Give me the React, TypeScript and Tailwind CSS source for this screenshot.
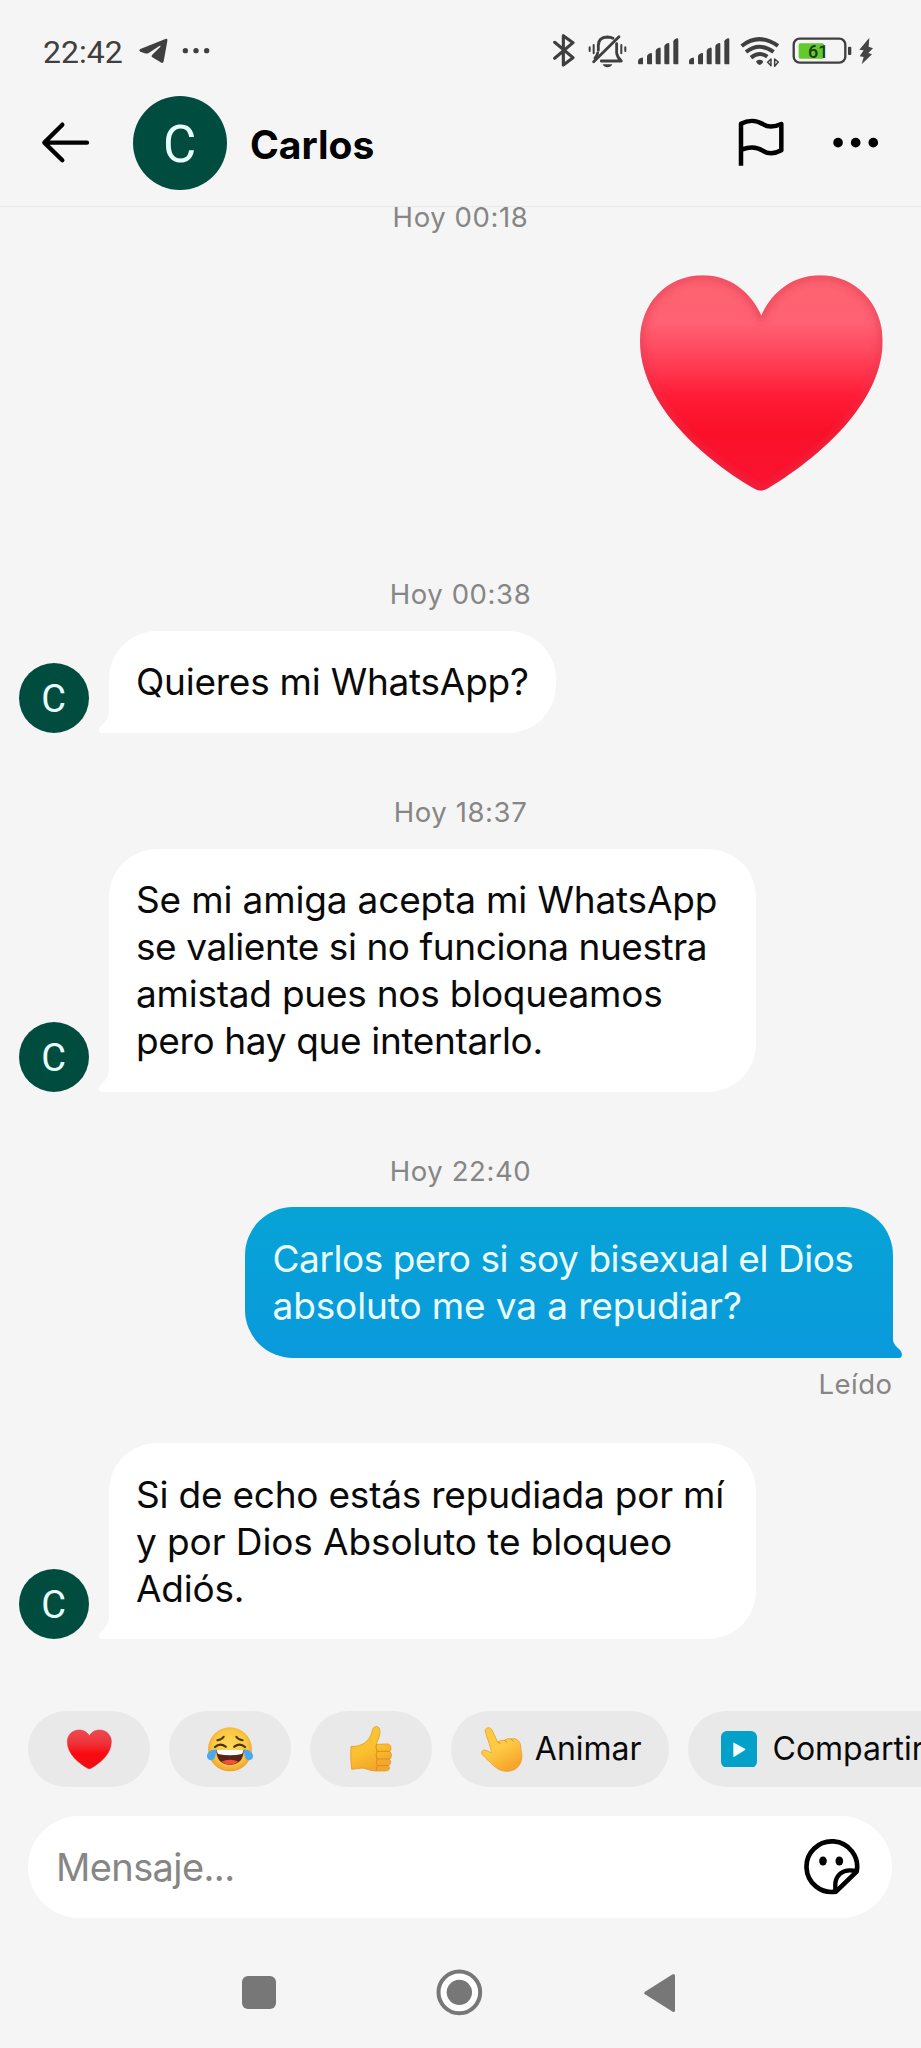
import type { ReactNode } from "react";

type IconProps = {
  box: [number, number, number, number];
  className: string;
  children: ReactNode;
};

function Icon({ box, className, children }: IconProps) {
  return (
    <svg viewBox={box.join(" ")} fill="none" className={`block shrink-0 ${className}`} aria-hidden="true">
      {children}
    </svg>
  );
}

const SIGNAL_BARS = [
  { x: 0, h: 20 },
  { x: 27, h: 34 },
  { x: 53, h: 50 },
  { x: 79, h: 64 },
  { x: 106, h: 78 },
];

function Signal() {
  return (
    <Icon box={[0, 0, 122, 106]} className="h-[35.3px] w-[40.7px]">
      {SIGNAL_BARS.map(({ x, h }) => (
        <path
          key={x}
          d={`M${x} ${94 - h + 9} q1 -5 6 -7 l5 -2 q4 -1 4 4 V94 H${x + 3} q-3 0 -3 -3z`}
          fill="#3f3f3f"
        />
      ))}
    </Icon>
  );
}

function StatusBar() {
  return (
    <div className="flex h-20 items-center pt-[22px] pl-[43px] text-[#3f3f3f]">
      <span className="pt-0.5 font-['Roboto',sans-serif] text-[32px] leading-none">22:42</span>
      <Icon box={[415, 115, 92, 84]} className="ml-[15.500px] h-7 w-[30.7px]">
        <path
          d="M422 151 L497 121 q8 -3 6 6 L492 188 q-2 8 -9 3 L458 176 q-5 -3 -1 -7 L482 144 q2 -4 -3 -2 L447 163 q-6 3 -12 1 L422 159 q-6 -4 0 -8z"
          fill="#3f3f3f"
        />
      </Icon>
      <Icon box={[550, 140, 86, 28]} className="ml-[13.5px] h-[9.3px] w-[28.7px]">
        <circle cx="560" cy="154" r="8" fill="#3f3f3f" />
        <circle cx="592" cy="154" r="8" fill="#3f3f3f" />
        <circle cx="624" cy="154" r="8" fill="#3f3f3f" />
      </Icon>

      <div className="mr-[47.500px] ml-auto flex items-center">
        <Icon box={[100, 100, 68, 106]} className="h-[35.3px] w-[22.7px]">
          <path
            d="M105 128 L160 174 L131 196 V108 L160 129 L105 176"
            stroke="#3f3f3f"
            strokeWidth="9.500"
            strokeLinejoin="round"
            strokeLinecap="round"
          />
        </Icon>
        <Icon box={[203, 100, 118, 106]} className="ml-[11.7px] h-[35.3px] w-[39.3px]">
          <g stroke="#3f3f3f" strokeWidth="8.500" strokeLinecap="round">
            <path d="M220 186 L296 111" />
            <path d="M234 152 V137 q0 -24 27 -25 q10 0 17 4" />
            <path d="M289 132 V160 q1 12 14 24 H243" strokeLinejoin="round" />
            <path d="M232 160 q-2 9 -8 15" />
            <path d="M208 143 V154 M220 136 V161 M303 136 V161 M315 143 V154" strokeWidth="6" />
          </g>
          <path d="M247 194 h29 q-4 9 -14.500 9 t-14.500 -9z" fill="#3f3f3f" />
        </Icon>
        <div className="ml-[11px] flex gap-[10.3px]">
          <Signal />
          <Signal />
        </div>
        <Icon box={[662, 100, 120, 106]} className="ml-[10.700px] h-[35.3px] w-10">
          <g stroke="#3f3f3f" strokeWidth="12">
            <path d="M667 139 Q720 98 776 139" />
            <path d="M680 157 Q720 126 763 157" />
            <path d="M695 174 Q720 154 744 171" />
          </g>
          <path d="M711 184 q10 -8 20 0 q1 8 -10 12 q-11 -4 -10 -12z" fill="#3f3f3f" />
          <path d="M755 178 V198 l-10 -10z M766 200 V178 l11 9z" stroke="#3f3f3f" strokeWidth="4.500" strokeLinejoin="round" />
        </Icon>
        <Icon box={[817, 100, 180, 106]} className="ml-[12px] h-[35.3px] w-[60px]">
          <rect x="822" y="117" width="155" height="72" rx="18" stroke="#3f3f3f" strokeWidth="7" />
          <rect x="837" y="131" width="76" height="46" rx="5" fill="#62c92f" />
          <rect x="985" y="141" width="10" height="25" rx="3" fill="#3f3f3f" />
          <text x="865" y="175" fontSize="54" fontWeight="500" fontFamily="Roboto, sans-serif" fill="#1d3d10">
            61
          </text>
        </Icon>
        <Icon box={[1013, 100, 48, 106]} className="ml-[5.300px] h-[35.3px] w-4">
          <path
            d="M1047 114 L1017 150 L1030 152 L1018 170 L1030 172 L1024 194 L1055 164 L1044 160 L1058 146 L1045 141z"
            fill="#454545"
          />
        </Icon>
      </div>
    </div>
  );
}

function Header() {
  return (
    <header className="h-[207px] shrink-0 border-b border-[#e9e9e9]">
      <StatusBar />
      <div className="flex h-[126px] items-center pl-10">
        <Icon box={[120, 360, 156, 136]} className="h-[45.3px] w-[52px]">
          <path
            d="M261 428 H135 M187 374 L133 428 L187 481"
            stroke="#000"
            strokeWidth="13"
            strokeLinecap="round"
            strokeLinejoin="round"
          />
        </Icon>
        <div className="ml-[41px] flex size-[94px] items-center justify-center rounded-full bg-[#004d40]">
          <span className="pt-0.5 pr-px font-['Roboto',sans-serif] text-[51px] leading-none text-[#e9fffb]">C</span>
        </div>
        <h1 className="ml-[23px] pt-0.5 text-[39px] leading-none font-bold text-black">Carlos</h1>
        <Icon box={[652, 352, 144, 158]} className="ml-auto h-[52.700px] w-12">
          <path
            d="M664 498 V372 C685 361 710 361 729 373 C745 384 765 382 785 373 V452 C765 463 744 463 729 453 C710 440 688 441 666 450"
            stroke="#000"
            strokeWidth="13.500"
            strokeLinecap="butt"
            strokeLinejoin="round"
          />
        </Icon>
        <Icon box={[938, 410, 138, 40]} className="mr-[42.500px] ml-[47.500px] h-[13.3px] w-[46px]">
          <circle cx="953" cy="430" r="14.500" fill="#000" />
          <circle cx="1006" cy="430" r="14.500" fill="#000" />
          <circle cx="1059" cy="430" r="14.500" fill="#000" />
        </Icon>
      </div>
    </header>
  );
}

function Stamp({ className, children }: { className: string; children: ReactNode }) {
  return (
    <p className={`text-center text-[27.500px] leading-10 tracking-[0.6px] text-[#868686] ${className}`}>{children}</p>
  );
}

type Line = { text: string; tracking: string };

function Incoming({ lines, className, bubbleClassName }: { lines: Line[]; className: string; bubbleClassName: string }) {
  return (
    <div className={`flex items-end pl-[18.500px] ${className}`}>
      <div className="flex size-[70px] shrink-0 items-center justify-center rounded-full bg-[#004d40]">
        <span className="pt-0.5 font-['Roboto',sans-serif] text-[38px] leading-none text-[#e9fffb]">C</span>
      </div>
      <div
        className={`relative ml-[20px] rounded-[48px] rounded-bl-none bg-white pl-[27.500px] text-[37px] leading-[47px] text-[#0a0a0a] ${bubbleClassName}`}
      >
        {lines.map((line) => (
          <p key={line.text} className={`whitespace-nowrap ${line.tracking}`}>
            {line.text}
          </p>
        ))}
        <svg viewBox="0 0 14 22" className="absolute bottom-0 -left-[11px] h-[22px] w-[14px]" aria-hidden="true">
          <path d="M11 0 Q11 8 2 16 Q-1 20 3 22 H14 V0z" fill="#fff" />
        </svg>
      </div>
    </div>
  );
}

const HEART =
  "M485 225 C455 155 390 104 310 104 C200 104 121 190 121 300 C121 480 290 640 462 743 Q483 757 505 743 C690 630 849 470 849 300 C849 190 768 104 660 104 C580 104 515 155 485 225z";

function BigHeart() {
  return (
    <Icon box={[118, 100, 734, 655]} className="mt-[37px] mr-[37.500px] ml-auto h-[218.3px] w-[244.700px]">
      <defs>
        <linearGradient id="heartFill" x1="0" y1="0" x2="0" y2="1">
          <stop offset="0" stopColor="#fc6370" />
          <stop offset="0.22" stopColor="#ff6273" />
          <stop offset="0.38" stopColor="#ff435a" />
          <stop offset="0.56" stopColor="#ff1c36" />
          <stop offset="0.72" stopColor="#fb1029" />
          <stop offset="1" stopColor="#fa1331" />
        </linearGradient>
        <clipPath id="heartClip">
          <path d={HEART} />
        </clipPath>
        <filter id="rimBlur" x="-10%" y="-10%" width="120%" height="120%">
          <feGaussianBlur stdDeviation="13" />
        </filter>
      </defs>
      <g clipPath="url(#heartClip)">
        <rect x="118" y="100" width="734" height="655" fill="url(#heartFill)" />
        <path d={HEART} stroke="#e0334c" strokeOpacity="0.7" strokeWidth="18" filter="url(#rimBlur)" />
      </g>
    </Icon>
  );
}

function SmallHeart() {
  return (
    <Icon box={[198, 112, 140, 128]} className="h-[42.700px] w-[46.700px]">
      <defs>
        <linearGradient id="smallHeart" x1="0" y1="0" x2="0" y2="1">
          <stop offset="0" stopColor="#ee4a50" />
          <stop offset="0.35" stopColor="#ee3238" />
          <stop offset="0.6" stopColor="#fb0a10" />
          <stop offset="1" stopColor="#ee0d14" />
        </linearGradient>
      </defs>
      <path
        d="M268 136 C262 124 250 118 237 118 C216 118 202 134 202 153 C202 190 234 216 263 233 Q268 236 273 233 C302 216 334 190 334 153 C334 134 320 118 299 118 C286 118 274 124 268 136z"
        fill="url(#smallHeart)"
        stroke="#d9303a"
        strokeWidth="1.500"
      />
    </Icon>
  );
}

function JoyFace() {
  return (
    <Icon box={[618, 106, 144, 140]} className="h-[46.700px] w-12">
      <defs>
        <radialGradient id="joyFace" cx="0.5" cy="0.45" r="0.55">
          <stop offset="0" stopColor="#fdd95a" />
          <stop offset="0.7" stopColor="#fbc741" />
          <stop offset="1" stopColor="#f0a12f" />
        </radialGradient>
      </defs>
      <circle cx="690" cy="176" r="66" fill="url(#joyFace)" />
      <path d="M652 149 q14 -3 19 -11 M728 149 q-14 -3 -19 -11" stroke="#4c3410" strokeWidth="6" strokeLinecap="round" />
      <path d="M645 169 q15 -14 32 -1 M703 168 q17 -13 32 1" stroke="#4c3410" strokeWidth="7" strokeLinecap="round" />
      <path d="M649 178 H731 C731 207 716 222 690 222 C664 222 649 207 649 178z" fill="#5a2416" />
      <path d="M651 178 H729 q1 8 -3 12 Q690 197 654 190 q-4 -4 -3 -12z" fill="#fff" />
      <path d="M664 213 Q690 201 716 213 Q690 230 664 213z" fill="#f0503c" />
      <path d="M651 177 C636 174 619 184 621 199 C623 211 641 212 645 200 C648 191 646 185 651 177z" fill="#4ba8ee" />
      <path d="M729 177 C744 174 761 184 759 199 C757 211 739 212 735 200 C732 191 734 185 729 177z" fill="#4ba8ee" />
    </Icon>
  );
}

function ThumbUp() {
  return (
    <Icon box={[1046, 106, 132, 142]} className="h-[47.300px] w-11">
      <defs>
        <linearGradient id="thumb" x1="0" y1="0" x2="0.4" y2="1">
          <stop offset="0" stopColor="#fbc736" />
          <stop offset="0.6" stopColor="#fbc02d" />
          <stop offset="1" stopColor="#f3a62b" />
        </linearGradient>
      </defs>
      <path
        d="M1052 170 C1074 172 1098 163 1110 140 C1117 128 1114 114 1125 111 C1137 108 1141 122 1138 135 C1136 147 1130 156 1128 164 L1164 163 Q1174 167 1172 178 Q1171 184 1168 186 Q1175 190 1173 200 Q1172 207 1167 209 Q1173 213 1171 221 Q1169 227 1164 228 Q1170 233 1167 239 Q1164 244 1155 244 H1128 C1105 244 1095 233 1080 236 L1054 239 Q1049 205 1052 170z"
        fill="url(#thumb)"
        stroke="#e59a2a"
        strokeWidth="2.500"
        strokeLinejoin="round"
      />
      <path
        d="M1128 164 q-3 10 2 21 H1168 M1130 185 q-6 11 0 23 H1167 M1130 208 q-5 10 1 20 H1164 M1131 228 q-4 6 -2 14"
        stroke="#dd8d22"
        strokeWidth="3"
        strokeLinecap="round"
      />
    </Icon>
  );
}

function PokingFinger() {
  return (
    <Icon box={[120, 106, 130, 140]} className="h-[46.700px] w-[43.300px]">
      <defs>
        <linearGradient id="finger" x1="0" y1="0" x2="0.5" y2="1">
          <stop offset="0" stopColor="#fdc93a" />
          <stop offset="0.55" stopColor="#fdcb45" />
          <stop offset="1" stopColor="#f7a62c" />
        </linearGradient>
      </defs>
      <path
        d="M136 124 C132 111 150 106 156 118 L173 154 Q182 147 193 149 Q202 141 212 145 Q226 140 235 150 Q243 157 243 178 C252 205 240 240 204 242 C178 243 165 229 150 215 L127 192 Q121 180 133 178 Q140 178 154 187 C154 175 148 160 145 151z"
        fill="url(#finger)"
        stroke="#e8a030"
        strokeWidth="2.500"
        strokeLinejoin="round"
      />
      <path
        d="M173 154 Q176 159 180 158 M193 149 Q199 150 201 155 M212 145 Q218 147 220 152"
        stroke="#dc9226"
        strokeWidth="3"
        strokeLinecap="round"
      />
    </Icon>
  );
}

function Chip({ className, children }: { className: string; children: ReactNode }) {
  return (
    <div className={`flex h-[76px] shrink-0 items-center rounded-full bg-[#e9e9e9] ${className}`}>{children}</div>
  );
}

function QuickReplies() {
  return (
    <div className="flex h-[76px] shrink-0 gap-[19px] overflow-hidden pl-7 text-[32px] leading-10 text-[#0a0a0a]">
      <Chip className="w-[122px] justify-center">
        <SmallHeart />
      </Chip>
      <Chip className="w-[122px] justify-center">
        <JoyFace />
      </Chip>
      <Chip className="w-[122px] justify-center">
        <ThumbUp />
      </Chip>
      <Chip className="w-[218px] pl-[29px]">
        <PokingFinger />
        <span className="ml-[11.500px]">Animar</span>
      </Chip>
      <Chip className="w-[280px] pl-[33px]">
        <Icon box={[0, 0, 108, 110]} className="h-[36.700px] w-9">
          <rect width="108" height="110" rx="18" fill="#03a0c9" />
          <path d="M39 35 L72 53 Q75 55 72 57 L39 78 Q37 79 37 76 V37 Q37 34 39 35z" fill="#f3feff" />
        </Icon>
        <span className="ml-[15.500px] whitespace-nowrap">Compartir</span>
      </Chip>
    </div>
  );
}

function Composer() {
  return (
    <div className="mr-[29px] ml-7 mt-[29px] flex h-[102px] shrink-0 items-center rounded-full bg-white pr-8 pl-[28px]">
      <span className="text-[38px] leading-none tracking-[-0.6px] text-[#868686]">Mensaje...</span>
      <Icon box={[1090, 444, 172, 172]} className="ml-auto h-[57.300px] w-[57.300px]">
        <path d="M1251 545 A76 76 0 1 0 1189 605 Z" stroke="#000" strokeWidth="14" strokeLinejoin="round" />
        <path
          d="M1187 604 V580 C1190 555 1208 540 1232 541 L1251 543"
          stroke="#000"
          strokeWidth="13"
          strokeLinejoin="round"
        />
        <ellipse cx="1150" cy="513" rx="11.500" ry="13.500" fill="#000" />
        <ellipse cx="1199" cy="513" rx="11.500" ry="13.500" fill="#000" />
      </Icon>
    </div>
  );
}

function NavBar() {
  return (
    <nav className="flex h-[130px] shrink-0 items-center pt-[19px] pl-[242px]">
      <div className="size-[33.500px] rounded-[6px] bg-[#777]" />
      <Icon box={[709, 117, 140, 140]} className="ml-[160.500px] size-[46.700px]">
        <circle cx="779" cy="187" r="62.500" fill="#fff" stroke="#777" strokeWidth="12" />
        <circle cx="779" cy="187" r="38" fill="#777" />
      </Icon>
      <Icon box={[1330, 127, 98, 120]} className="ml-[160px] h-10 w-[32.700px]">
        <path d="M1336 183 L1419 131 Q1426 129 1426 135 V239 Q1425 246 1419 243 L1336 191 Q1331 187 1336 183z" fill="#777" />
      </Icon>
    </nav>
  );
}

export default function App() {
  return (
    <div className="flex h-[2048px] w-[921px] flex-col overflow-hidden bg-[#f5f5f5] font-['Inter',sans-serif]">
      <Header />
      <main className="flex h-[1504px] shrink-0 flex-col overflow-hidden">
        <Stamp className="-mt-[10px]">Hoy 00:18</Stamp>
        <BigHeart />
        <Stamp className="mt-[82px]">Hoy 00:38</Stamp>
        <Incoming
          className="mt-[17px]"
          bubbleClassName="w-[447px] pt-[27px] pb-7"
          lines={[{ text: "Quieres mi WhatsApp?", tracking: "tracking-[-0.24px]" }]}
        />
        <Stamp className="mt-[59px]">Hoy 18:37</Stamp>
        <Incoming
          className="mt-[17px]"
          bubbleClassName="w-[647px] pt-[27px] pb-7"
          lines={[
            { text: "Se mi amiga acepta mi WhatsApp", tracking: "tracking-[-0.16px]" },
            { text: "se valiente si no funciona nuestra", tracking: "tracking-[-0.43px]" },
            { text: "amistad pues nos bloqueamos", tracking: "tracking-[-0.24px]" },
            { text: "pero hay que intentarlo.", tracking: "tracking-[-0.36px]" },
          ]}
        />
        <Stamp className="mt-[59px]">Hoy 22:40</Stamp>
        <div className="relative mt-4 mr-7 ml-auto w-[648px] rounded-[48px] rounded-br-none bg-linear-to-b from-[#07a3d6] to-[#0a9adc] pt-7 pb-[29px] pl-[27.500px] text-[37px] leading-[47px] text-[#ebfdff]">
          <p className="tracking-[-0.46px] whitespace-nowrap">Carlos pero si soy bisexual el Dios</p>
          <p className="tracking-[-0.12px] whitespace-nowrap">absoluto me va a repudiar?</p>
          <svg viewBox="0 0 12 22" className="absolute -right-[9px] bottom-0 h-[22px] w-[12px]" aria-hidden="true">
            <path d="M0 0 H3 V4 Q3 8 10 14 Q14 19 10 22 H0z" fill="#0a9adc" />
          </svg>
        </div>
        <p className="mt-1.5 mr-[28.500px] text-right text-[27.500px] leading-10 tracking-[0.5px] text-[#868686]">Leído</p>
        <Incoming
          className="mt-[39px]"
          bubbleClassName="w-[647px] pt-7 pb-[27px]"
          lines={[
            { text: "Si de echo estás repudiada por mí", tracking: "tracking-[-0.22px]" },
            { text: "y por Dios Absoluto te bloqueo", tracking: "tracking-[-0.1px]" },
            { text: "Adiós.", tracking: "tracking-[-0.2px]" },
          ]}
        />
      </main>
      <QuickReplies />
      <Composer />
      <NavBar />
    </div>
  );
}
